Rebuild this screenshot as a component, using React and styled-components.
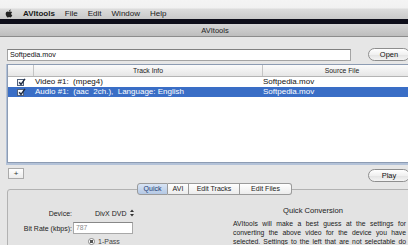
import React from 'react';
import styled, { createGlobalStyle } from 'styled-components';
import { FaApple } from 'react-icons/fa';

const Global = createGlobalStyle`
  html, body { margin: 0; padding: 0; overflow: hidden; background: #e6e6e6; }
  body { font-family: "Liberation Sans", Arial, sans-serif; color: #151515; }
  #root { width: 408px; height: 245px; overflow: hidden; }
`;

const Screen = styled.div`
  width: 430px;
  display: flex;
  flex-direction: column;
`;

const MenuBar = styled.div`
  height: 19px;
  box-sizing: border-box;
  padding: 8px 0 0 5px;
  display: flex;
  align-items: center;
  gap: 10px;
  font-size: 8px;
  color: #1a1a1a;
  background: linear-gradient(to bottom, #f4f4f4 0, #f1f1f1 8px, #dcdcdc 9px, #c9c9c9 19px);
`;

const MenuItem = styled.span`
  font-weight: ${p => (p.$app ? 'bold' : 'normal')};
  line-height: 11px;
`;

const Apple = styled.span`
  display: flex;
  width: 8px;
  color: #222;
`;

const DarkBand = styled.div`
  height: 5px;
  background: #0e0e1a;
`;

const TitleBar = styled.div`
  height: 13px;
  box-sizing: border-box;
  border-bottom: 1px solid #8c8c8c;
  background: linear-gradient(to bottom, #d6d6d6, #bdbdbd);
  font-size: 7.5px;
  line-height: 13px;
  text-align: center;
  color: #222;
`;

const Body = styled.div`
  padding: 11px 8px 0 7px;
  display: flex;
  flex-direction: column;
`;

const TopRow = styled.div`
  display: grid;
  grid-template-columns: 344px 42px;
  column-gap: 17px;
  align-items: center;
`;

const TextField = styled.div`
  height: 12px;
  box-sizing: border-box;
  border: 1px solid #a4a4a4;
  border-top-color: #808080;
  background: #fff;
  font-size: 7.2px;
  line-height: 10px;
  padding-left: 2px;
  color: #111;
`;

const PushButton = styled.div`
  height: 13px;
  box-sizing: border-box;
  border: 1px solid #8e8e8e;
  border-radius: 7px;
  background: linear-gradient(to bottom, #ffffff, #f0f0f0 50%, #e2e2e2 51%, #f4f4f4);
  font-size: 7.5px;
  line-height: 11px;
  text-align: center;
  color: #111;
`;

const Table = styled.div`
  margin-top: 3px;
  height: 99px;
  box-sizing: border-box;
  border: 1px solid #8d9cb3;
  box-shadow: 0 1px 0 1px #b3c2d8;
  background: #fff;
  display: flex;
  flex-direction: column;
`;

const cols = '25px 229px 1fr';

const HeaderRow = styled.div`
  display: grid;
  grid-template-columns: ${cols};
  height: 11px;
  border-bottom: 1px solid #b4b4b4;
  background: linear-gradient(to bottom, #fbfbfb, #e6e6e6);
`;

const HeaderCell = styled.div`
  font-size: 6.8px;
  line-height: 11px;
  text-align: center;
  color: #222;
  border-left: ${p => (p.$first ? 'none' : '1px solid #c4c4c4')};
`;

const Row = styled.div`
  display: grid;
  grid-template-columns: ${cols};
  height: 10px;
  align-items: center;
  background: ${p => (p.$selected ? '#3a6ec6' : '#fff')};
  color: ${p => (p.$selected ? '#fff' : '#111')};
  font-size: 8px;
`;

const Cell = styled.div`
  padding-left: ${p => p.$pl || 2}px;
  white-space: pre;
  line-height: 10px;
`;

const CheckBox = styled.span`
  display: block;
  width: 7px;
  height: 7px;
  margin-left: 9px;
  box-sizing: border-box;
  border: 1px solid #50607a;
  background: linear-gradient(to bottom, #fff, #dde3ee);
  position: relative;
  svg { position: absolute; left: 0px; top: -2px; }
`;

const ButtonBar = styled.div`
  margin-top: 5px;
  padding-right: 12px;
  display: grid;
  grid-template-columns: 17px 1fr 42px;
  align-items: start;
`;

const PlusButton = styled.div`
  height: 11px;
  margin-left: 1px;
  box-sizing: border-box;
  border: 1px solid #aaaaaa;
  background: linear-gradient(to bottom, #fff, #ececec);
  font-size: 8px;
  line-height: 9px;
  text-align: center;
  color: #333;
`;

const PlayButton = styled(PushButton)`
  grid-column: 3;
  margin-top: 1px;
`;

const TabRow = styled.div`
  margin-top: 1px;
  display: flex;
  justify-content: center;
  position: relative;
  z-index: 1;
  margin-bottom: -6px;
`;

const Tab = styled.div`
  width: ${p => p.$w}px;
  height: 12px;
  box-sizing: border-box;
  border: 1px solid #9a9a9a;
  border-left-width: ${p => (p.$first ? 1 : 0)}px;
  border-radius: ${p => (p.$first ? '3px 0 0 3px' : p.$last ? '0 3px 3px 0' : '0')};
  background: ${p =>
    p.$active
      ? 'linear-gradient(to bottom, #d8e4f4, #b4c8e4)'
      : 'linear-gradient(to bottom, #ffffff, #ececec)'};
  color: ${p => (p.$active ? '#1d3b73' : '#222')};
  font-size: 7px;
  line-height: 10px;
  text-align: center;
`;

const Panel = styled.div`
  height: 80px;
  box-sizing: border-box;
  border: 1px solid #b2b2b2;
  border-radius: 3px;
  background: #e3e3e3;
  display: grid;
  grid-template-columns: 225px 1fr;
`;

const FormGrid = styled.div`
  padding-top: 17px;
  display: grid;
  grid-template-columns: 65px auto;
  grid-auto-rows: min-content;
  row-gap: 3px;
  align-items: center;
`;

const Label = styled.div`
  font-size: 7px;
  text-align: right;
  padding-right: 1px;
  color: #222;
  white-space: nowrap;
`;

const Popup = styled.div`
  margin-left: 22px;
  height: 12px;
  display: flex;
  align-items: center;
  gap: 3px;
  font-size: 7px;
  color: #222;
`;

const Input = styled.div`
  width: 60px;
  height: 12px;
  box-sizing: border-box;
  border: 1px solid #a8a8a8;
  border-top-color: #888;
  background: #fff;
  font-size: 6.8px;
  line-height: 10px;
  padding-left: 2px;
  color: #8a8a8a;
`;

const RadioRow = styled.div`
  grid-column: 2;
  margin-left: 15px;
  margin-top: 1px;
  display: flex;
  align-items: center;
  gap: 3px;
  font-size: 7px;
  color: #444;
`;

const Radio = styled.span`
  width: 7px;
  height: 7px;
  border-radius: 50%;
  box-sizing: border-box;
  border: 1px solid #888;
  background: radial-gradient(circle, #555 0 1.5px, #fff 2px);
`;

const Info = styled.div`
  padding-top: 16px;
  width: 173px;
  display: flex;
  flex-direction: column;
`;

const Heading = styled.div`
  font-size: 7.6px;
  text-align: center;
  padding-right: 13px;
  line-height: 9px;
  color: #1a1a1a;
`;

const Para = styled.div`
  margin-top: 5px;
  font-size: 6.8px;
  line-height: 8.8px;
  color: #1a1a1a;
`;

const Line = styled.div`
  text-align: justify;
  text-align-last: justify;
`;

const Check = () => (
  <svg width="8" height="8" viewBox="0 0 8 8">
    <path d="M1.2 4.2 L3 6.4 L7 0.8" fill="none" stroke="#1c2a44" strokeWidth="1.4" />
  </svg>
);

const Arrows = () => (
  <svg width="4" height="8" viewBox="0 0 4 8">
    <path d="M0 3 L2 0.5 L4 3 Z M0 5 L2 7.5 L4 5 Z" fill="#333" />
  </svg>
);

const tracks = [
  { info: 'Video #1:  (mpeg4)', src: 'Softpedia.mov' },
  { info: 'Audio #1:  (aac  2ch.),  Language: English', src: 'Softpedia.mov', selected: true },
];

const tabs = [
  { label: 'Quick', w: 31, active: true },
  { label: 'AVI', w: 21 },
  { label: 'Edit Tracks', w: 51 },
  { label: 'Edit Files', w: 52 },
];

const lines = [
  'AVItools will make a best guess at the settings for',
  'converting the above video for the device you have',
  'selected.  Settings to the left that are not selectable do',
  'not need adjustment for you.  If the video needs to be',
];

export default function App() {
  return (
    <>
      <Global />
      <Screen>
        <MenuBar>
          <Apple><FaApple size={9} /></Apple>
          <MenuItem $app>AVItools</MenuItem>
          <MenuItem>File</MenuItem>
          <MenuItem>Edit</MenuItem>
          <MenuItem>Window</MenuItem>
          <MenuItem>Help</MenuItem>
        </MenuBar>
        <DarkBand />
        <TitleBar>AVItools</TitleBar>
        <Body>
          <TopRow>
            <TextField>Softpedia.mov</TextField>
            <PushButton>Open</PushButton>
          </TopRow>
          <Table>
            <HeaderRow>
              <HeaderCell $first />
              <HeaderCell>Track Info</HeaderCell>
              <HeaderCell>Source File</HeaderCell>
            </HeaderRow>
            {tracks.map(t => (
              <Row key={t.info} $selected={t.selected}>
                <CheckBox><Check /></CheckBox>
                <Cell>{t.info}</Cell>
                <Cell $pl={1}>{t.src}</Cell>
              </Row>
            ))}
          </Table>
          <ButtonBar>
            <PlusButton>+</PlusButton>
            <PlayButton>Play</PlayButton>
          </ButtonBar>
          <TabRow>
            {tabs.map((t, i) => (
              <Tab key={t.label} $w={t.w} $active={t.active} $first={i === 0} $last={i === tabs.length - 1}>
                {t.label}
              </Tab>
            ))}
          </TabRow>
          <Panel>
            <FormGrid>
              <Label>Device:</Label>
              <Popup>DivX DVD <Arrows /></Popup>
              <Label>Bit Rate (kbps):</Label>
              <Input>787</Input>
              <RadioRow><Radio />1-Pass</RadioRow>
            </FormGrid>
            <Info>
              <Heading>Quick Conversion</Heading>
              <Para>
                {lines.map(l => <Line key={l}>{l}</Line>)}
              </Para>
            </Info>
          </Panel>
        </Body>
      </Screen>
    </>
  );
}
